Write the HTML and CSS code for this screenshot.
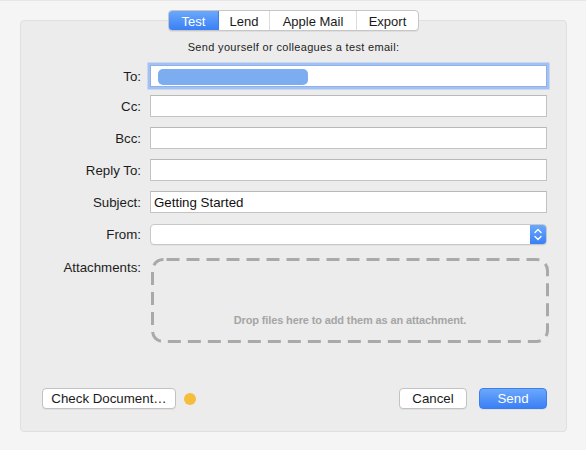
FILE: index.html
```html
<!DOCTYPE html>
<html>
<head>
<meta charset="utf-8">
<link rel="stylesheet" href="styles.css">
</head>
<body>
<div class="window">
  <div class="tabs">
    <span class="tab tab-test sel">Test</span><span class="tab tab-lend">Lend</span><span class="tab tab-mail">Apple Mail</span><span class="tab tab-export">Export</span>
  </div>
  <div class="panel">
    <p class="intro">Send yourself or colleagues a test email:</p>
    <div class="form">
      <div class="row row-to"><label class="lbl">To:</label><div class="field focus"><span class="pill"></span></div></div>
      <div class="row"><label class="lbl">Cc:</label><div class="field"></div></div>
      <div class="row"><label class="lbl">Bcc:</label><div class="field"></div></div>
      <div class="row"><label class="lbl">Reply To:</label><div class="field"></div></div>
      <div class="row"><label class="lbl">Subject:</label><div class="field">Getting Started</div></div>
      <div class="row"><label class="lbl">From:</label>
        <div class="popup"><span class="popup-val"></span>
          <span class="stepper"><svg width="16" height="19" viewBox="0 0 16 19"><path d="M5 7.5 L8 4.5 L11 7.5" fill="none" stroke="#fff" stroke-width="1.4" stroke-linecap="round" stroke-linejoin="round"/><path d="M5 11.5 L8 14.5 L11 11.5" fill="none" stroke="#fff" stroke-width="1.4" stroke-linecap="round" stroke-linejoin="round"/></svg></span>
        </div>
      </div>
      <div class="row row-attach"><label class="lbl lbl-attach">Attachments:</label>
        <div class="drop">
          <svg class="dash" width="398" height="85" viewBox="0 0 398 85"><rect x="1.5" y="1.5" width="395" height="82" rx="11" ry="11" fill="none" stroke="#a9a9a9" stroke-width="3" stroke-dasharray="13 7" stroke-dashoffset="-3"/></svg>
          <span class="drop-text">Drop files here to add them as an attachment.</span>
        </div>
      </div>
    </div>
    <div class="footer">
      <button class="btn btn-check">Check Document…</button>
      <span class="dot"></span>
      <span class="spacer"></span>
      <button class="btn btn-cancel">Cancel</button>
      <button class="btn btn-send">Send</button>
    </div>
  </div>
</div>
</body>
</html>
```
FILE: styles.css
```css
* { box-sizing: border-box; }
html, body { margin: 0; padding: 0; }
body {
  background: #f5f5f5;
  border-top: 1px solid #e6e6e6;
  height: 450px;
  font-family: "Liberation Sans", Arial, sans-serif;
  font-size: 13px;
  color: #1c1c1c;
}
.window { padding-top: 9px; }
.tabs {
  position: relative;
  z-index: 1;
  display: flex;
  width: 251px;
  height: 21px;
  margin-left: 168px;
  background: #fff;
  border: 1px solid #c6c6c6;
  border-radius: 4px;
  box-shadow: 0 1px 0 rgba(0,0,0,0.06);
  overflow: hidden;
}
.tab {
  display: flex;
  align-items: center;
  justify-content: center;
  height: 100%;
  border-right: 1px solid #dcdcdc;
  color: #1a1a1a;
  line-height: 19px;
  padding-top: 1px;
}
.tab:last-child { border-right: none; }
.tab-test { width: 50px; }
.tab-lend { width: 51px; }
.tab-mail { width: 87px; }
.tab-export { flex: 1; }
.tab.sel {
  background: linear-gradient(#6ba8fb, #3a80f6);
  color: #fff;
  border-right-color: #3f7fe8;
}
.panel {
  margin-top: -11px;
  margin-left: 20px;
  width: 547px;
  height: 412px;
  background: #ececec;
  border: 1px solid #e0e0e0;
  border-radius: 4px;
  padding: 20px 19px 22px 0;
  display: flex;
  flex-direction: column;
}
.intro {
  margin: 0 -19px 11px 0;
  text-align: center;
  font-size: 11px;
  letter-spacing: 0.33px;
  line-height: 13px;
  color: #1e1e1e;
}
.form { display: flex; flex-direction: column; gap: 10px; }
.row { display: flex; align-items: center; gap: 9px; }
.row-to { margin-bottom: -2px; }
.lbl {
  width: 120px;
  flex: none;
  text-align: right;
  line-height: 21px;
  padding-top: 1px;
  font-size: 13.3px;
  color: #1c1c1c;
}
.field {
  flex: 1;
  height: 22px;
  background: #fff;
  border: 1px solid #c3c3c3;
  border-top-color: #b9b9b9;
  padding-left: 3px;
  padding-top: 1px;
  line-height: 19px;
  font-size: 13.3px;
  color: #111;
}
.field.focus {
  border-color: #8fb0ea;
  box-shadow: 0 0 0 2.5px #a3c1f3;
  padding: 3px 0 0 7px;
}
.pill {
  display: block;
  width: 150px;
  height: 16px;
  border-radius: 5px;
  background: #7badf0;
}
.popup {
  flex: 1;
  height: 21px;
  display: flex;
  background: #fff;
  border: 1px solid #c8c8c8;
  border-radius: 4px;
  box-shadow: 0 1px 0 rgba(0,0,0,0.04);
  overflow: hidden;
}
.popup-val { flex: 1; }
.stepper {
  width: 16px;
  display: flex;
  align-items: center;
  justify-content: center;
  background: linear-gradient(#6ba8fb, #3a80f6);
}
.stepper svg { display: block; }
.row-attach { align-items: flex-start; margin-top: 3px; }
.lbl-attach { line-height: 16px; padding-top: 2px; }
.drop {
  position: relative;
  width: 398px;
  height: 85px;
  margin-left: 1px;
  margin-right: -2px;
  display: flex;
  align-items: flex-end;
  justify-content: center;
  padding-bottom: 16px;
}
.dash { position: absolute; left: 0; top: 0; }
.drop-text {
  font-size: 11px;
  line-height: 13px;
  font-weight: bold;
  letter-spacing: -0.13px;
  color: #a5a5a5;
}
.footer {
  margin-top: auto;
  display: flex;
  align-items: center;
  padding-left: 21px;
}
.spacer { flex: 1; }
.btn {
  height: 21px;
  font-family: "Liberation Sans", Arial, sans-serif;
  font-size: 13.3px;
  line-height: 19px;
  padding: 0;
  background: #fff;
  color: #1a1a1a;
  border: 1px solid #c2c2c2;
  border-radius: 4px;
  box-shadow: 0 1px 0 rgba(0,0,0,0.05);
}
.btn-check { width: 134px; }
.dot {
  width: 12px;
  height: 12px;
  margin-left: 8px;
  border-radius: 50%;
  background: #f6bd3c;
}
.btn-cancel { width: 68px; }
.btn-send {
  width: 68px;
  margin-left: 12px;
  color: #fff;
  background: linear-gradient(#6ba8fb, #3a7ff6);
  border-color: #3c7ef0;
}
```
